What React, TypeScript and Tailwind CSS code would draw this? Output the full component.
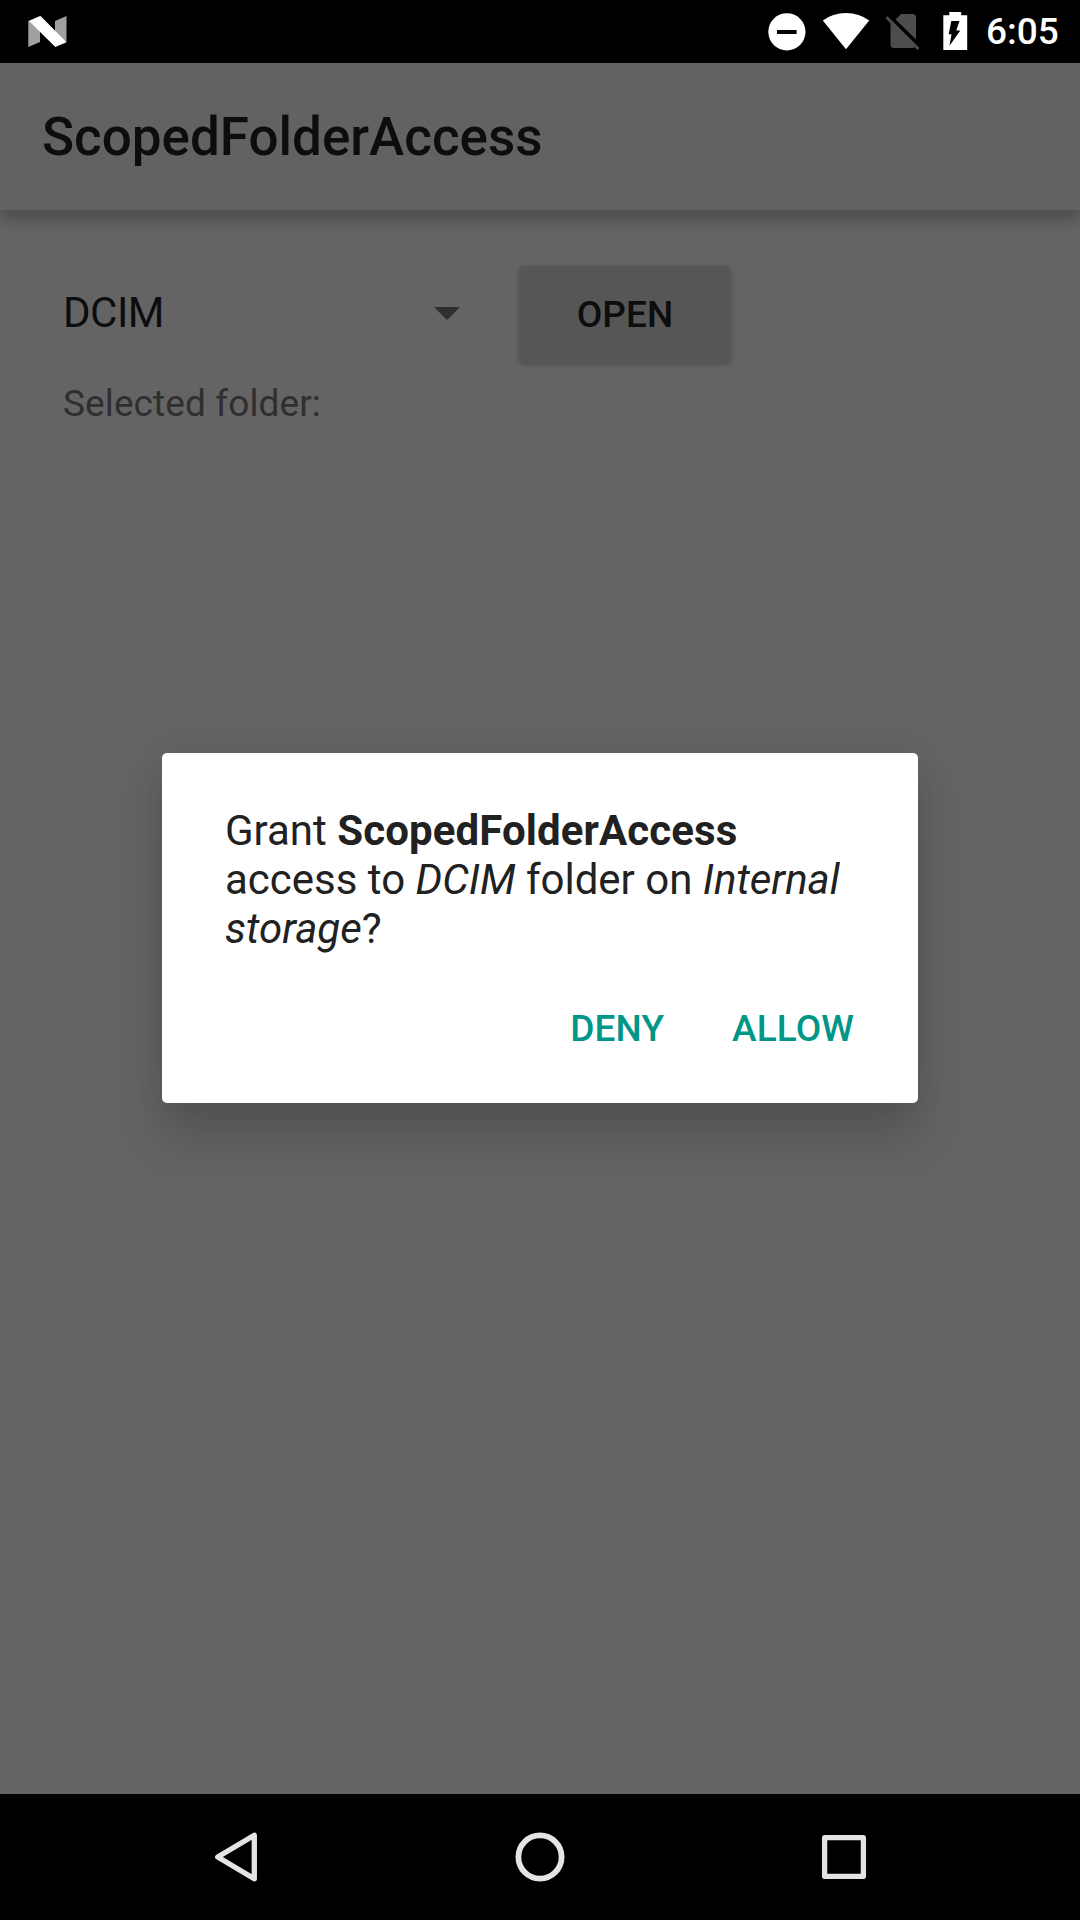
function NotificationMark() {
  return (
    <svg className="h-[63px] w-[68px] shrink-0" viewBox="0 0 68 63">
      <path fill="#a0a0a0" d="M28.3 21L40 16V42L28.3 47ZM55 21L66.5 16V42L55 36Z" />
      <path fill="#fff" d="M29 21L40.6 16L66.5 42.2L55.3 47Z" />
    </svg>
  );
}

function StatusIcons() {
  return (
    <svg className="h-[63px] w-[220px] shrink-0" viewBox="765 0 220 63">
      <circle cx="786.9" cy="31.8" r="18.6" fill="#fff" />
      <rect x="777" y="30" width="19.6" height="4" fill="#000" />
      <path fill="#fff" d="M846 49.3L822.8 20.5Q832.5 12.9 846 12.9Q859.500 12.9 869.200 20.500Z" />
      <path fill="#4d4d4d" d="M901 14H912.500Q916 14 916 17.500V39.500L895.500 19.500Z" />
      <path fill="#4d4d4d" d="M890.500 22.300L915 47Q914 48 912.500 48H894Q890.500 48 890.500 44.500Z" />
      <path stroke="#4d4d4d" strokeWidth="3" d="M886.500 17.300L918.500 49" />
      <path fill="#fff" d="M943.300 15.200H949.300V12H961.200V15.200H967.200V50H943.300Z" />
      <path fill="#000" d="M951.300 21H959.500L956.300 30.500H960.300L949.500 45.700L951.500 34.300H948.700Z" />
    </svg>
  );
}

function StatusBar() {
  return (
    <header className="flex h-[63px] items-center justify-between bg-black">
      <NotificationMark />
      <div className="flex w-[315px] items-center">
        <StatusIcons />
        <span className="ml-[1px] text-[37px] leading-[63px] font-medium text-white">6:05</span>
      </div>
    </header>
  );
}

function PermissionDialog() {
  return (
    <div className="absolute top-[753px] left-[162px] flex h-[350px] w-[756px] flex-col justify-between rounded-[5px] bg-white px-[63px] pt-[53px] shadow-[0_34px_46px_rgba(0,0,0,0.17),0_0_36px_rgba(0,0,0,0.06)]">
      <p className="text-[42px] leading-[49px] text-[#212121]">
        Grant <b className="tracking-[0.1px]">ScopedFolderAccess</b>
        <br />
        access to <i>DCIM</i> folder on <i>Internal</i>
        <br />
        <i>storage</i>?
      </p>
      <div className="flex h-[149px] justify-end gap-[68px] pr-[1px] text-[37px] leading-[149px] font-medium tracking-[0.1px] text-[#009688]">
        <button>DENY</button>
        <button>ALLOW</button>
      </div>
    </div>
  );
}

function NavigationBar() {
  return (
    <nav className="flex h-[126px] items-center justify-between bg-black pr-[213px] pl-[213px]">
      <svg className="h-[50px] w-[46px]" viewBox="0 0 46 50" fill="none" stroke="#e4e4e4" strokeWidth="5.300" strokeLinejoin="round">
        <path d="M41.300 3.200V46.800L4.700 25Z" />
      </svg>
      <svg className="h-[50px] w-[50px]" viewBox="0 0 50 50" fill="none" stroke="#e4e4e4" strokeWidth="5.800">
        <circle cx="25" cy="25" r="21.600" />
      </svg>
      <svg className="h-[46px] w-[46px]" viewBox="0 0 46 46" fill="none" stroke="#e4e4e4" strokeWidth="5.300" strokeLinejoin="round">
        <rect x="3.600" y="3.600" width="38.800" height="38.800" rx="0.500" />
      </svg>
    </nav>
  );
}

export default function App() {
  return (
    <div className="relative flex h-[1920px] w-[1080px] flex-col overflow-hidden bg-[#646464] font-[Roboto,sans-serif]">
      <StatusBar />
      <div className="flex h-[147px] shrink-0 items-center bg-[#626262] px-[42px] shadow-[0_10px_13px_rgba(0,0,0,0.22)]">
        <h1 className="text-[53px] leading-[62px] font-medium text-[#0d0d0d]">ScopedFolderAccess</h1>
      </div>
      <main className="flex flex-1 flex-col px-[63px] pt-[56px]">
        <div className="flex items-start">
          <div className="flex h-[97px] w-[397px] items-center justify-between pb-[2px] text-[42px] text-[#0d0d0d]">
            <span className="pb-[2px] leading-[49px] tracking-[-0.500px]">DCIM</span>
            <svg className="h-[13px] w-[26px]" viewBox="0 0 26 13" fill="#2f2f2f">
              <path d="M0 0H26L13 13Z" />
            </svg>
          </div>
          <button className="ml-[59px] h-[98px] w-[212px] rounded-[5px] bg-[#565656] text-[37px] leading-[96px] font-medium tracking-[0.1px] text-[#0d0d0d] shadow-[0_1px_5px_rgba(0,0,0,0.18)]">
            OPEN
          </button>
        </div>
        <p className="mt-[18px] text-[37px] leading-[43px] tracking-[0.1px] text-[#2f2f2f]">Selected folder:</p>
      </main>
      <NavigationBar />
      <PermissionDialog />
    </div>
  );
}
